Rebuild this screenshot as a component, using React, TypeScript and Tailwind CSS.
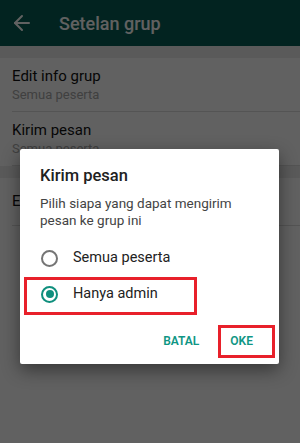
import { ArrowLeft } from "lucide-react";

function SettingRow({ title, sub }: { title: string; sub?: string }) {
  return (
    <div className="pl-3">
      <div className={`flex flex-col justify-center border-b border-[#dedede] ${sub ? "h-[54px]" : "h-[48px]"}`}>
        <div className="text-[15px] leading-[19px] text-[#111]">{title}</div>
        {sub && <div className="text-[13px] leading-[17px] text-[#a8a8a8]">{sub}</div>}
      </div>
    </div>
  );
}

function Radio({ checked, label }: { checked?: boolean; label: string }) {
  return (
    <div className="flex h-[36px] items-center pl-[21px]">
      <span
        className={`flex h-[17px] w-[17px] items-center justify-center rounded-full border-2 ${
          checked ? "border-[#0f8f7d]" : "border-[#757575]"
        }`}
      >
        {checked && <span className="h-[8px] w-[8px] rounded-full bg-[#0f8f7d]" />}
      </span>
      <span className="ml-[15px] text-[14.5px] text-[#222]">{label}</span>
    </div>
  );
}

export default function App() {
  return (
    <div className="relative h-[443px] w-[300px] overflow-hidden bg-white font-['Roboto',sans-serif]">
      {/* page behind the dialog */}
      <div className="flex h-[46px] items-center bg-[#075e54] text-white">
        <ArrowLeft size={24} strokeWidth={2} className="ml-[10px]" />
        <span className="ml-[25px] text-[18px] font-medium">Setelan grup</span>
      </div>
      <div className="h-[12px] bg-[#ececec]" />
      <SettingRow title="Edit info grup" sub="Semua peserta" />
      <SettingRow title="Kirim pesan" sub="Semua peserta" />
      <div className="h-[12px] bg-[#ececec]" />
      <SettingRow title="Edit admin grup" />

      {/* dim */}
      <div className="absolute inset-0 bg-black/[0.62]" />

      {/* dialog */}
      <div className="absolute left-[20px] top-[149px] w-[259px] rounded-[2px] bg-white pb-[5px] shadow-[0_6px_18px_rgba(0,0,0,0.45)]">
        <div className="px-5 pt-[16px] text-[16.5px] font-medium leading-[22px] text-[#212121]">Kirim pesan</div>
        <div className="mt-[8px] px-5 text-[13.5px] leading-[17px] text-[#444]">
          Pilih siapa yang dapat mengirim
          <br />
          pesan ke grup ini
        </div>
        <div className="mt-[11px]">
          <Radio label="Semua peserta" />
          <Radio checked label="Hanya admin" />
        </div>
        <div className="mt-[11px] flex h-[36px] items-center justify-end gap-[31px] pr-[26px] text-[12px] font-semibold text-[#0f9684]">
          <span>BATAL</span>
          <span>OKE</span>
        </div>
      </div>

      {/* highlight boxes */}
      <div className="absolute left-[24px] top-[277px] h-[38px] w-[173px] border-[3px] border-[#e8202a]" />
      <div className="absolute left-[218px] top-[325px] h-[33px] w-[57px] border-[3px] border-[#e8202a]" />
    </div>
  );
}
